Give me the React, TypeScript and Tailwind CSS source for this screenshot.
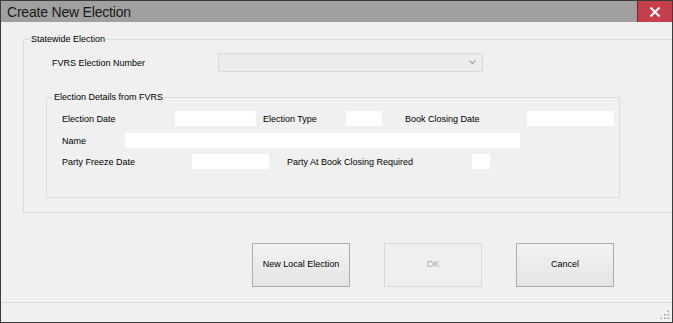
import React from 'react';

const inputCls = 'h-[15px] bg-white shrink-0';
const labelCls = 'shrink-0 text-[9px] leading-[12px] text-black';

export default function App() {
  return (
    <div className="w-[673px] h-[323px] border border-[#3c3c3c] bg-[#f0f0f0] flex flex-col overflow-hidden font-['Liberation_Sans',Arial,sans-serif]">
      {/* title bar */}
      <div className="h-[21px] bg-[#a0a0a0] flex items-stretch shrink-0">
        <div className="flex-1 flex items-center pl-[6px] text-[14px] leading-none text-[#1a1a1a] tracking-[-0.2px]">
          Create New Election
        </div>
        <button className="w-[35px] bg-[#c63e4a] border-l border-[#5a3035] flex items-center justify-center">
          <svg width="12" height="12" viewBox="0 0 12 12">
            <path d="M1.5 1.5 L10.5 10.5 M10.5 1.5 L1.5 10.5" stroke="#fff" strokeWidth="2" />
          </svg>
        </button>
      </div>

      <div className="flex-1 flex flex-col">
        <fieldset className="ml-[22px] mt-[11px] h-[180px] border border-r-0 border-[#dcdcdc]">
          <legend className={`ml-[6px] px-[1px] ${labelCls}`}>Statewide Election</legend>

          <div className="flex items-center mt-[8px]">
            <span className={`ml-[28px] w-[166px] ${labelCls}`}>FVRS Election Number</span>
            <div className="w-[265px] h-[19px] bg-[#ececec] border border-[#dadada] flex items-center justify-end pr-[6px]">
              <svg width="7" height="5" viewBox="0 0 7 5">
                <path d="M0.5 0.5 L3.5 3.5 L6.5 0.5" stroke="#a8a8a8" strokeWidth="1.3" fill="none" />
              </svg>
            </div>
          </div>

          <fieldset className="ml-[22px] mt-[19px] w-[574px] h-[107px] border border-[#dcdcdc]">
            <legend className={`ml-[6px] px-[1px] ${labelCls}`}>Election Details from FVRS</legend>

            <div className="flex items-center mt-[8px] pl-[15px]">
              <span className={`w-[113px] ${labelCls}`}>Election Date</span>
              <div className={`w-[81px] ${inputCls}`} />
              <span className={`ml-[7px] w-[83px] ${labelCls}`}>Election Type</span>
              <div className={`w-[36px] ${inputCls}`} />
              <span className={`ml-[23px] w-[122px] ${labelCls}`}>Book Closing Date</span>
              <div className={`w-[87px] ${inputCls}`} />
            </div>

            <div className="flex items-center mt-[7px] pl-[15px]">
              <span className={`w-[63px] ${labelCls}`}>Name</span>
              <div className={`w-[395px] ${inputCls}`} />
            </div>

            <div className="flex items-center mt-[6px] pl-[15px]">
              <span className={`w-[130px] ${labelCls}`}>Party Freeze Date</span>
              <div className={`w-[77px] ${inputCls}`} />
              <span className={`ml-[18px] w-[185px] ${labelCls}`}>Party At Book Closing Required</span>
              <div className={`w-[18px] ${inputCls}`} />
            </div>
          </fieldset>
        </fieldset>

        <div className="flex ml-[251px] mt-[30px] gap-[34px]">
          <button className="w-[98px] h-[44px] border border-[#adadad] bg-gradient-to-b from-[#f3f3f3] to-[#e4e4e4] text-[9px] text-black">
            New Local Election
          </button>
          <button disabled className="w-[98px] h-[44px] border border-[#d9d9d9] bg-[#efefef] text-[9px] text-[#a8a8a8]">
            OK
          </button>
          <button className="w-[98px] h-[44px] border border-[#adadad] bg-gradient-to-b from-[#f3f3f3] to-[#e4e4e4] text-[9px] text-black">
            Cancel
          </button>
        </div>
      </div>

      {/* status bar */}
      <div className="h-[20px] shrink-0 border-t border-[#dadada] flex items-end justify-end pr-[2px] pb-[2px]">
        <svg width="10" height="10" viewBox="0 0 10 10">
          <rect x="7.5" y="0.5" width="1.5" height="1.5" fill="#a0a0a0" />
          <rect x="4" y="4" width="1.5" height="1.5" fill="#a0a0a0" />
          <rect x="7.5" y="4" width="1.5" height="1.5" fill="#a0a0a0" />
          <rect x="0.5" y="7.5" width="1.5" height="1.5" fill="#a0a0a0" />
          <rect x="4" y="7.5" width="1.5" height="1.5" fill="#a0a0a0" />
          <rect x="7.5" y="7.5" width="1.5" height="1.5" fill="#a0a0a0" />
        </svg>
      </div>
    </div>
  );
}
